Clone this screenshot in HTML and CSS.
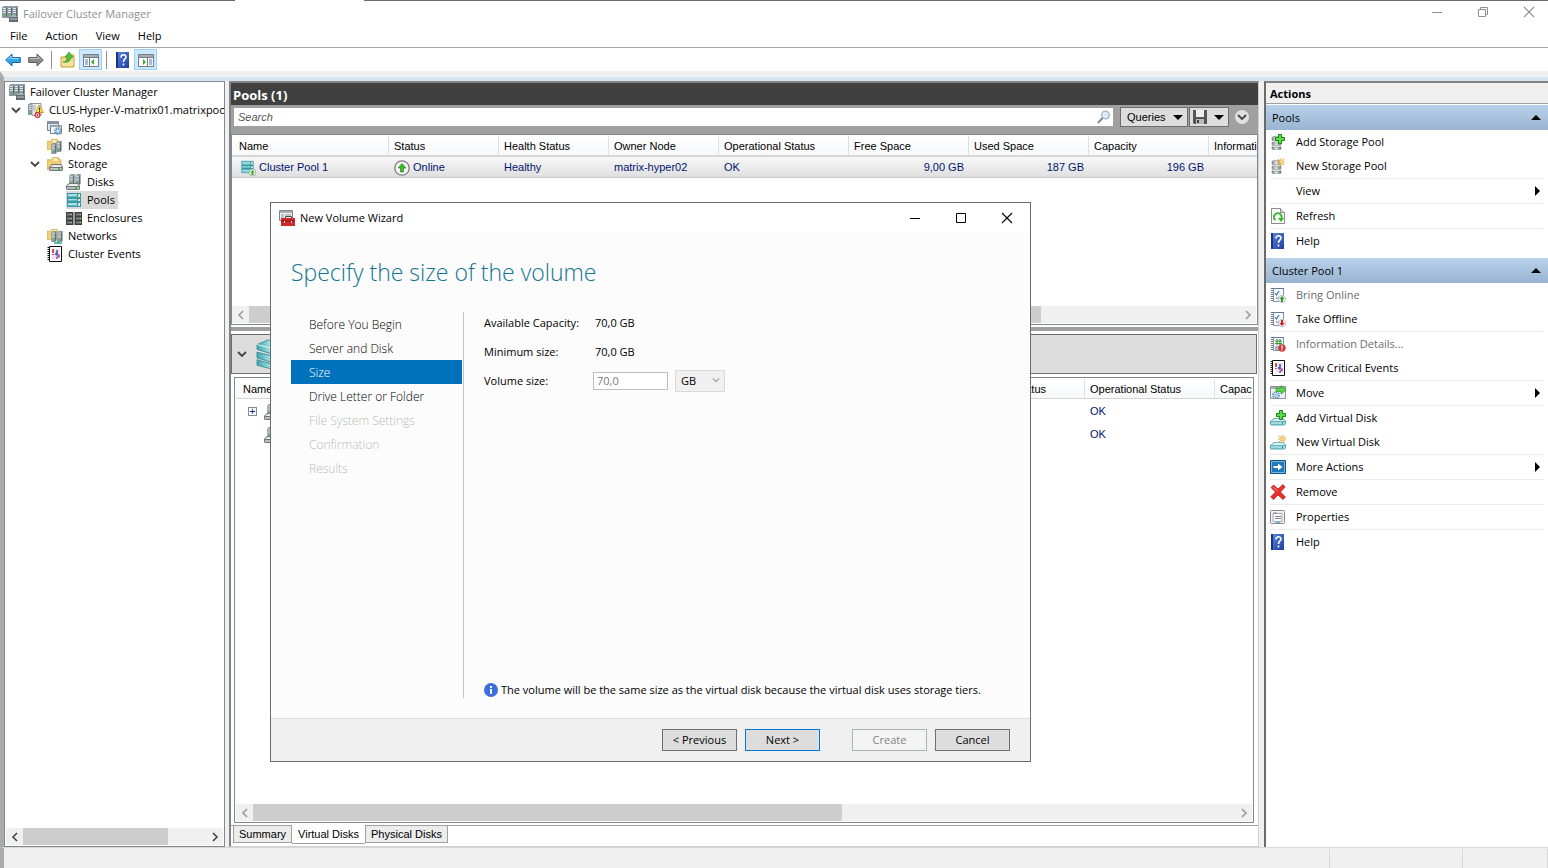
FILE: index.html
```html
<!DOCTYPE html>
<html lang="en">
<head>
    <meta charset="utf-8">
    <title>Failover Cluster Manager</title>
    <link rel="stylesheet" href="styles.css">
</head>
<body>
    <!-- icon set -->
    <svg class="icon-set" aria-hidden="true">
        <defs>
            <linearGradient id="gBlue" x1="0" y1="0" x2="1" y2="1"><stop offset="0" stop-color="#5b86e0"/><stop offset="1" stop-color="#1f3d9e"/></linearGradient>
            <linearGradient id="gTeal" x1="0" y1="0" x2="1" y2="0"><stop offset="0" stop-color="#3fa3ad"/><stop offset="0.5" stop-color="#a8e6ea"/><stop offset="1" stop-color="#4fb0ba"/></linearGradient>
            <linearGradient id="gGrey" x1="0" y1="0" x2="1" y2="0"><stop offset="0" stop-color="#8b9095"/><stop offset="0.5" stop-color="#e3e6e8"/><stop offset="1" stop-color="#7d8287"/></linearGradient>
        </defs>
        <symbol id="server" viewBox="0 0 6 12">
            <path d="M0 1.500 2 0h4v11l-2 1H0z" fill="#8b979e"/>
            <path d="M1 2h3v1H1zM1 4h3v1H1zM1 6h3v1H1z" fill="#e1ecf0"/>
            <path d="M4 2h1v9H4z" fill="#5c676e"/>
            <path d="M1 9h2v1H1z" fill="#4bd041"/>
        </symbol>
        <symbol id="folder" viewBox="0 0 14 12">
            <path d="M0 3h5V1h6v2h2v9H0z" fill="#f0cf74" stroke="#cfa645" stroke-width="0.7"/>
            <path d="M6 2h4v2H6z" fill="#fff6d5"/>
        </symbol>
        <symbol id="drive" viewBox="0 0 14 7">
            <path d="M3 0h9l2 3v3l-1 1H1L0 6V3z" fill="#72777a"/>
            <path d="M3.500 1h8L13 3H1z" fill="#e8ecee"/>
            <path d="M1 4h12v2H1z" fill="#b8bec1"/>
            <path d="M9 4h2v2H9z" fill="#43c83b"/>
        </symbol>
        <symbol id="cluster" viewBox="0 0 16 16">
            <use href="#server" x="0" y="0" width="6" height="12"/>
            <use href="#server" x="5" y="0" width="6" height="12"/>
            <use href="#server" x="10" y="0" width="6" height="12"/>
            <path d="M7 11h9v5H7z" fill="#626b72"/>
            <path d="M9 11v-1h5v1M8 13h7" fill="none" stroke="#c1c9ce"/>
        </symbol>
        <symbol id="cluster-alert" viewBox="0 0 16 16">
            <use href="#server" x="0" y="1" width="6" height="12"/>
            <path d="M4 1.500h9v12H4z" fill="#eceff0" stroke="#8e979d"/>
            <path d="M5 4h3M5 6h3M5 8h2" stroke="#9aa4ab"/>
            <path d="M11 3 15.500 10.500h-8z" fill="#ffd84c" stroke="#c08d12" stroke-width="0.8"/>
            <path d="M11.500 5.500v3M11.500 9v1" stroke="#3b2c00"/>
            <circle cx="9.500" cy="13" r="2.400" fill="#fff" stroke="#cc2a2a" stroke-width="1.200"/>
            <circle cx="9.500" cy="13" r="0.900" fill="#cc2a2a"/>
        </symbol>
        <symbol id="roles" viewBox="0 0 16 16">
            <path d="M.5 1.500h11v9H.5z" fill="#dce3ea" stroke="#76838f"/>
            <path d="M0 1h12v3H0z" fill="#8793a0"/>
            <path d="M3.500 5.500h11v8h-11z" fill="#f0f4f7" stroke="#76838f"/>
            <path d="M3 5h12v2H3z" fill="#98a4b0"/>
            <circle cx="11" cy="11" r="3" fill="none" stroke="#5b8cba" stroke-width="2" stroke-dasharray="1.400 0.900"/>
            <circle cx="11" cy="11" r="2.500" fill="#8db6dc"/>
            <circle cx="11" cy="11" r="1" fill="#fff"/>
        </symbol>
        <symbol id="nodes" viewBox="0 0 16 16">
            <use href="#folder" x="0" y="0" width="13" height="12"/>
            <use href="#server" x="4" y="5" width="6" height="11"/>
            <use href="#server" x="9" y="3" width="6" height="11"/>
        </symbol>
        <symbol id="storage" viewBox="0 0 16 16">
            <use href="#folder" x="0" y="0" width="15" height="14"/>
            <use href="#drive" x="2" y="8" width="14" height="7"/>
        </symbol>
        <symbol id="disks" viewBox="0 0 16 16">
            <use href="#server" x="3" y="0" width="6" height="11"/>
            <use href="#server" x="9" y="0" width="6" height="11"/>
            <use href="#drive" x="0" y="9" width="14" height="7"/>
        </symbol>
        <symbol id="pools" viewBox="0 0 16 16">
            <path d="M1 1h14v14H1z" fill="#3a98a3"/>
            <path d="M2 2h9v3H2zM2 7h9v2H2zM2 11h9v3H2z" fill="#a3e1e6"/>
            <path d="M2 4h9v1H2zM2 8h9v1H2zM2 13h9v1H2z" fill="#64bec8"/>
            <path d="M12 2h2v3h-2zM12 7h2v2h-2zM12 11h2v3h-2z" fill="#d5f1ee"/>
            <path d="M12 2h1v2h-1zM12 7h1v1h-1zM12 12h1v1h-1z" fill="#e8c542"/>
        </symbol>
        <symbol id="pool-up" viewBox="0 0 16 16">
            <use href="#pools" x="0" y="0" width="15" height="14"/>
            <circle cx="12.500" cy="12.500" r="3.500" fill="#e8ece8" stroke="#9aa39a" stroke-width="0.700"/>
            <path d="m12.500 10 2 2.500h-1V15h-2v-2.500h-1z" fill="#37b22c"/>
        </symbol>
        <symbol id="enclosures" viewBox="0 0 16 16">
            <path d="M0 2h7.500v13H0zM8.500 2H16v13H8.500z" fill="#3c3e3f"/>
            <path d="M1 4.500h5M1 8.500h5M1 12.500h5M10 4.500h5M10 8.500h5M10 12.500h5" stroke="#7f8484" stroke-width="2"/>
            <path d="M5.500 4v11M14.500 4v11" stroke="#b9df5d" stroke-dasharray="1 3"/>
        </symbol>
        <symbol id="networks" viewBox="0 0 16 16">
            <use href="#folder" x="0" y="0" width="13" height="12"/>
            <use href="#server" x="4" y="3" width="6" height="11"/>
            <use href="#server" x="10" y="3" width="6" height="11"/>
            <path d="M7 15h8M11 13v2" stroke="#29ac8b" stroke-width="1.500"/>
        </symbol>
        <symbol id="events" viewBox="0 0 16 16">
            <path d="M2.500.5h12v15h-12z" fill="#fff" stroke="#111"/>
            <path d="M1.500 1v14" stroke="#111" stroke-width="2" stroke-dasharray="1 1"/>
            <path d="M5 4h8M5 6h8M5 8h8M5 10h8M5 12h6" stroke="#b5b5c2" stroke-width="0.600"/>
            <path d="M6 3v4M6 8v1" stroke="#e01919" stroke-width="1.500"/>
            <path d="M10 4v4h-2" fill="none" stroke="#2343b0" stroke-width="1.400"/>
            <path d="M9 9h3v2h-2v2" fill="none" stroke="#8e2593" stroke-width="1.200"/>
        </symbol>
        <symbol id="arrow-back" viewBox="0 0 16 16">
            <path d="M.7 8 7 2v3.500h8.300v5H7V14z" fill="#33a3e8" stroke="#1766a8" stroke-linejoin="round"/>
            <path d="M2.500 7.500 6 4v2.500h8" fill="none" stroke="#9bdbff"/>
        </symbol>
        <symbol id="arrow-next" viewBox="0 0 16 16">
            <path d="M15.300 8 9 2v3.500H.7v5H9V14z" fill="#8b8b8b" stroke="#5c5c5c" stroke-linejoin="round"/>
            <path d="M1.500 6.500H10V4.500L13 7.500" fill="none" stroke="#c4c4c4"/>
        </symbol>
        <symbol id="folder-up" viewBox="0 0 16 16">
            <path d="M1 5h5l1-2h7v12H1z" fill="#f3d67d" stroke="#c9a144"/>
            <path d="M2 8h11v6H2z" fill="#f8e4a1"/>
            <path d="M3 10c3 0 4-2 4-5H5l4-5 4 5h-2c0 4-3 6-8 5z" fill="#4ec03c" stroke="#2d8721" stroke-width="0.600"/>
        </symbol>
        <symbol id="pane-left" viewBox="0 0 16 16">
            <path d="M.5 2.500h15v12H.5z" fill="#fff" stroke="#757d85"/>
            <path d="M1 3h14v2H1z" fill="#a3abb3"/>
            <path d="M1 5.500h14M6.500 6v8" stroke="#757d85"/>
            <path d="M2 8h3M2 10h3M2 12h3" stroke="#4b78ac"/>
            <path d="M11 7v6l-3-3z" fill="#36ad28"/>
        </symbol>
        <symbol id="pane-right" viewBox="0 0 16 16">
            <path d="M.5 2.500h15v12H.5z" fill="#fff" stroke="#757d85"/>
            <path d="M1 3h14v2H1z" fill="#a3abb3"/>
            <path d="M1 5.500h14M9.500 6v8" stroke="#757d85"/>
            <path d="M11 8h3M11 10h3M11 12h3" stroke="#4b78ac"/>
            <path d="M5 7v6l3-3z" fill="#36ad28"/>
        </symbol>
        <symbol id="help" viewBox="0 0 16 16">
            <path d="M1 0h13v16H1z" fill="url(#gBlue)"/>
            <path d="M1 0h2v16H1z" fill="#183486"/>
            <path d="M6 5.500c0-3.500 5-3.500 5-.5 0 2-2.500 2-2.500 5M8.500 11.500v2" fill="none" stroke="#fff" stroke-width="1.600"/>
        </symbol>
        <symbol id="online" viewBox="0 0 16 16">
            <circle cx="8" cy="8" r="7.200" fill="#f4f4f4" stroke="#7c7c7c" stroke-width="1.300"/>
            <path d="m8 3.500 4 4.500H9.500v4h-3V8H4z" fill="#3db82c" stroke="#23811a" stroke-width="0.600"/>
        </symbol>
        <symbol id="stack" viewBox="0 0 16 16">
            <path d="M2 3.500C2 2 11 2 11 3.500V6c0 1.500-9 1.500-9 0zM2 8c2 1 7 1 9 0v2.500c0 1.500-9 1.500-9 0zM2 12.500c2 1 7 1 9 0V15c0 1.500-9 1.500-9 0z" fill="url(#gGrey)" stroke="#666b6f" stroke-width="0.500"/>
            <path d="M8 10h2M8 14h2" stroke="#3fc234"/>
        </symbol>
        <symbol id="plus" viewBox="0 0 10 10">
            <path d="M3.500.5h3v3h3v3h-3v3h-3v-3h-3v-3h3z" fill="#5ddc49" stroke="#158a13"/>
        </symbol>
        <symbol id="spark" viewBox="0 0 8 8">
            <path d="M4 0v8M0 4h8M1 1l6 6M7 1 1 7" stroke="#eba42b"/>
            <circle cx="4" cy="4" r="1.600" fill="#ffd76b"/>
        </symbol>
        <symbol id="pool-add" viewBox="0 0 16 16">
            <use href="#stack" width="16" height="16"/>
            <use href="#plus" x="5" y="0" width="10" height="10"/>
        </symbol>
        <symbol id="pool-new" viewBox="0 0 16 16">
            <use href="#stack" width="16" height="16"/>
            <use href="#spark" x="7" y="0" width="8" height="8"/>
        </symbol>
        <symbol id="refresh" viewBox="0 0 16 16">
            <path d="M1.500.5h9l4 4v11h-13z" fill="#f8f8f8" stroke="#8c8c8c"/>
            <path d="M10.500.5v4h4" fill="#ddd" stroke="#8c8c8c"/>
            <path d="M5.500 12A3.800 3.800 0 1 1 11 11" fill="none" stroke="#38b52b" stroke-width="2"/>
            <path d="M8 10h6l-3 4z" fill="#38b52b"/>
        </symbol>
        <symbol id="report" viewBox="0 0 16 16">
            <path d="M3.500 1.500h10v13h-10z" fill="#f6f8fb" stroke="#8793a8"/>
            <path d="M3 1h11v1H3z" fill="#6078ad"/>
            <path d="M2 1v14" stroke="#777" stroke-width="2.500" stroke-dasharray="1 1"/>
        </symbol>
        <symbol id="bring-online" viewBox="0 0 16 16">
            <use href="#report" width="16" height="16"/>
            <path d="m5 6 1.500 2L9 4M6 11h3" fill="none" stroke="#2f7dcb" stroke-width="1.200"/>
            <circle cx="12" cy="12" r="3.700" fill="#eee" stroke="#aaa" stroke-width="0.600"/>
            <path d="m12 9 2.500 3H13v3h-2v-3H9.500z" fill="#2f9e26"/>
        </symbol>
        <symbol id="take-offline" viewBox="0 0 16 16">
            <use href="#report" width="16" height="16"/>
            <path d="m5 6 1.500 2L9 4M6 11h3" fill="none" stroke="#2f7dcb" stroke-width="1.200"/>
            <circle cx="12" cy="12" r="3.700" fill="#eee" stroke="#aaa" stroke-width="0.600"/>
            <path d="m12 15 2.500-3H13V9h-2v3H9.500z" fill="#cc1f1f"/>
        </symbol>
        <symbol id="info-details" viewBox="0 0 16 16">
            <use href="#report" width="16" height="16"/>
            <path d="M7 3v6M10 3v6M5 5h7M5 7.500h7" stroke="#35a02c" stroke-width="1.200"/>
            <path d="M5 11h4M5 13h4" stroke="#4a74b5"/>
            <circle cx="12" cy="12" r="3.700" fill="#d4383c"/>
            <path d="M12 9.500v3M12 13.500v1" stroke="#fff" stroke-width="1.300"/>
        </symbol>
        <symbol id="move" viewBox="0 0 16 16">
            <path d="M.5 1.500h15v12H.5z" fill="#eef1f4" stroke="#87929c"/>
            <path d="M1 2h14v2H1z" fill="#a5afb9"/>
            <circle cx="6" cy="10" r="3" fill="none" stroke="#6790b8" stroke-width="2" stroke-dasharray="1.400 0.900"/>
            <circle cx="6" cy="10" r="2" fill="#a9c8e4"/>
            <path d="M6 3h5V.7L16 5l-5 4V6.500H6z" fill="#5ed44b" stroke="#289420" stroke-width="0.700"/>
        </symbol>
        <symbol id="vdisk" viewBox="0 0 16 16">
            <path d="M4 8h9l3 3v3l-2 1.500H1L0 14v-2.500z" fill="#59a7b1"/>
            <path d="M4.500 8.700h8L15 11H1.500z" fill="#d3f3f6"/>
            <path d="M1 11.800h14v2.500H1z" fill="#a0dbe2"/>
            <path d="M12 12h1v2h-1z" fill="#2a9c76"/>
        </symbol>
        <symbol id="vdisk-add" viewBox="0 0 16 16">
            <use href="#vdisk" width="16" height="16"/>
            <use href="#plus" x="6" y="0" width="10" height="10"/>
        </symbol>
        <symbol id="vdisk-new" viewBox="0 0 16 16">
            <use href="#vdisk" width="16" height="16"/>
            <use href="#spark" x="8" y="1" width="8" height="8"/>
        </symbol>
        <symbol id="more" viewBox="0 0 16 16">
            <path d="M.5 1.500h15v13H.5z" fill="#2078b8" stroke="#155183"/>
            <path d="M1.500 2.500h13v11h-13z" fill="none" stroke="#7ab8e2"/>
            <path d="M3.500 7H8V4.500L12.500 8 8 11.500V9H3.500z" fill="#fff"/>
        </symbol>
        <symbol id="remove" viewBox="0 0 16 16">
            <path d="M1 3.500 3.500 1 8 5 13 .5 15 3l-4.500 5 5 5-2.500 2.500L8 11l-4.500 4.500L.7 13 5.500 8z" fill="#e5302f" stroke="#ad1717" stroke-width="0.700"/>
            <path d="m3 3 4.500 4" stroke="#ff9b92"/>
        </symbol>
        <symbol id="properties" viewBox="0 0 16 16">
            <rect x="0.500" y="1.500" width="14" height="13" rx="1" fill="#f4f4f4" stroke="#83888d"/>
            <path d="M3 4.500h9v8H3z" fill="#fff" stroke="#a0a7ad"/>
            <path d="M3 4h4M5 7.500h6M5 9.500h6" stroke="#7c858c"/>
            <path d="M6 13.500h4" stroke="#4dc3ea"/>
        </symbol>
        <symbol id="wizard" viewBox="0 0 16 16">
            <path d="M.5.5h13v10H.5z" fill="#eef0f2" stroke="#7e868d"/>
            <path d="M1 1h12v2H1z" fill="#a6adb3"/>
            <path d="M2 5h3M2 7h3M6 5h6" stroke="#8d959b"/>
            <path d="M6.500 8.500V6.500h6v2" fill="none" stroke="#4b4b4b"/>
            <path d="M2 8h14v8H2z" fill="#cf2b2b"/>
            <path d="M2 11h14" stroke="#8e1313"/>
            <path d="M5 11h1v2H5zM12 11h1v2h-1z" fill="#e7dada"/>
        </symbol>
        <symbol id="pool-large" viewBox="0 0 32 32">
            <path d="M0 6 12 1l18 3v7l-14 5L0 11zM0 14l16 4 14-4v6l-14 5L0 20zM0 22l16 5 14-5v4l-14 6L0 28z" fill="url(#gTeal)" stroke="#3a8f99"/>
            <path d="m0 6 16 4 14-6" fill="none" stroke="#dff8f9"/>
        </symbol>
        <symbol id="save" viewBox="0 0 16 16">
            <path d="M1 1h14v14H2l-1-1z" fill="#555"/>
            <path d="M4 1h8v7H4z" fill="#eee"/>
            <path d="M4 10h8v5H4z" fill="#bbb"/>
            <path d="M5 11h2v3H5z" fill="#444"/>
        </symbol>
        <symbol id="magnifier" viewBox="0 0 14 14">
            <path d="m1 13 4.500-5" stroke="#8a8a8a" stroke-width="2"/>
            <circle cx="8.500" cy="5" r="3.800" fill="#dcecf8" stroke="#9fb3c4" stroke-width="1.300"/>
        </symbol>
        <symbol id="chevron-down" viewBox="0 0 10 10"><path d="m1 3 4 4 4-4" fill="none" stroke="#444" stroke-width="1.800"/></symbol>
        <symbol id="chevron-left" viewBox="0 0 10 10"><path d="M7 1 3 5l4 4" fill="none" stroke="currentColor" stroke-width="1.600"/></symbol>
        <symbol id="chevron-right" viewBox="0 0 10 10"><path d="m3 1 4 4-4 4" fill="none" stroke="currentColor" stroke-width="1.600"/></symbol>
        <symbol id="minimize" viewBox="0 0 12 12"><path d="M1 6.500h10" stroke="currentColor"/></symbol>
        <symbol id="maximize" viewBox="0 0 12 12"><path d="M1.500 1.500h9v9h-9z" fill="none" stroke="currentColor"/></symbol>
        <symbol id="restore" viewBox="0 0 12 12"><path d="M1.500 3.500h7v7h-7zM3.500 3.500v-2h7v7h-2" fill="none" stroke="currentColor"/></symbol>
        <symbol id="close" viewBox="0 0 12 12"><path d="m1 1 10 10M11 1 1 11" stroke="currentColor" stroke-width="1.100"/></symbol>
    </svg>

    <header class="titlebar">
        <svg class="icon"><use href="#cluster"/></svg>
        <span class="titlebar-text">Failover Cluster Manager</span>
        <div class="window-buttons">
            <button type="button" aria-label="Minimize"><svg><use href="#minimize"/></svg></button>
            <button type="button" aria-label="Restore"><svg><use href="#restore"/></svg></button>
            <button type="button" aria-label="Close"><svg><use href="#close"/></svg></button>
        </div>
    </header>

    <nav class="menubar">
        <button type="button">File</button>
        <button type="button">Action</button>
        <button type="button">View</button>
        <button type="button">Help</button>
    </nav>

    <div class="toolbar">
        <button type="button" aria-label="Back"><svg class="icon"><use href="#arrow-back"/></svg></button>
        <button type="button" aria-label="Forward"><svg class="icon"><use href="#arrow-next"/></svg></button>
        <span class="toolbar-sep"></span>
        <button type="button" aria-label="Up"><svg class="icon"><use href="#folder-up"/></svg></button>
        <button type="button" class="pressed" aria-label="Console tree"><svg class="icon"><use href="#pane-left"/></svg></button>
        <span class="toolbar-sep"></span>
        <button type="button" aria-label="Help"><svg class="icon"><use href="#help"/></svg></button>
        <button type="button" class="pressed" aria-label="Action pane"><svg class="icon"><use href="#pane-right"/></svg></button>
    </div>

    <main class="console">
        <aside class="tree-pane">
            <ul class="tree">
                <li>
                    <a href="#"><svg class="icon"><use href="#cluster"/></svg><span>Failover Cluster Manager</span></a>
                    <ul>
                        <li>
                            <svg class="twisty"><use href="#chevron-down"/></svg>
                            <a href="#"><svg class="icon"><use href="#cluster-alert"/></svg><span>CLUS-Hyper-V-matrix01.matrixpool</span></a>
                            <ul>
                                <li><a href="#"><svg class="icon"><use href="#roles"/></svg><span>Roles</span></a></li>
                                <li><a href="#"><svg class="icon"><use href="#nodes"/></svg><span>Nodes</span></a></li>
                                <li>
                                    <svg class="twisty"><use href="#chevron-down"/></svg>
                                    <a href="#"><svg class="icon"><use href="#storage"/></svg><span>Storage</span></a>
                                    <ul>
                                        <li><a href="#"><svg class="icon"><use href="#disks"/></svg><span>Disks</span></a></li>
                                        <li><a href="#" class="selected"><svg class="icon"><use href="#pools"/></svg><span>Pools</span></a></li>
                                        <li><a href="#"><svg class="icon"><use href="#enclosures"/></svg><span>Enclosures</span></a></li>
                                    </ul>
                                </li>
                                <li><a href="#"><svg class="icon"><use href="#networks"/></svg><span>Networks</span></a></li>
                                <li><a href="#"><svg class="icon"><use href="#events"/></svg><span>Cluster Events</span></a></li>
                            </ul>
                        </li>
                    </ul>
                </li>
            </ul>
            <div class="scrollbar scrollbar-active">
                <button type="button" aria-label="Scroll left"><svg><use href="#chevron-left"/></svg></button>
                <div class="track"><div class="thumb thumb-tree"></div></div>
                <button type="button" aria-label="Scroll right"><svg><use href="#chevron-right"/></svg></button>
            </div>
        </aside>

        <section class="center-pane">
            <h1>Pools (1)</h1>
            <div class="filter-bar">
                <div class="search-box">
                    <input type="text" placeholder="Search" aria-label="Search">
                    <svg><use href="#magnifier"/></svg>
                </div>
                <button type="button" class="filter-btn">Queries <span class="caret"></span></button>
                <button type="button" class="filter-btn save-btn" aria-label="Save query"><svg class="icon"><use href="#save"/></svg><span class="caret"></span></button>
                <button type="button" class="expand-btn" aria-label="Expand"><svg><use href="#chevron-down"/></svg></button>
            </div>
            <div class="list pool-list">
                <table class="pool-table">
                    <colgroup>
                        <col class="col-name"><col class="col-m"><col class="col-m"><col class="col-m"><col class="col-xl"><col class="col-l"><col class="col-l"><col class="col-l"><col class="col-m">
                    </colgroup>
                    <thead>
                        <tr>
                            <th>Name</th><th>Status</th><th>Health Status</th><th>Owner Node</th><th>Operational Status</th><th>Free Space</th><th>Used Space</th><th>Capacity</th><th>Information</th>
                        </tr>
                    </thead>
                    <tbody>
                        <tr class="selected-row">
                            <td><svg class="icon"><use href="#pool-up"/></svg> Cluster Pool 1</td>
                            <td><svg class="icon"><use href="#online"/></svg> Online</td>
                            <td>Healthy</td>
                            <td>matrix-hyper02</td>
                            <td>OK</td>
                            <td class="num">9,00 GB</td>
                            <td class="num">187 GB</td>
                            <td class="num">196 GB</td>
                            <td></td>
                        </tr>
                    </tbody>
                </table>
                <div class="scrollbar">
                    <button type="button" aria-label="Scroll left"><svg><use href="#chevron-left"/></svg></button>
                    <div class="track"><div class="thumb thumb-pools"></div></div>
                    <button type="button" aria-label="Scroll right"><svg><use href="#chevron-right"/></svg></button>
                </div>
            </div>
            <div class="splitter"></div>
            <div class="detail-header">
                <svg class="twisty"><use href="#chevron-down"/></svg>
                <svg class="detail-icon"><use href="#pool-large"/></svg>
            </div>
            <div class="list disk-list">
                <table class="disk-table">
                    <colgroup>
                        <col><col class="col-m"><col class="col-xl"><col class="col-clip">
                    </colgroup>
                    <thead>
                        <tr><th>Name</th><th>Health Status</th><th>Operational Status</th><th>Capacity</th></tr>
                    </thead>
                    <tbody>
                        <tr><td><button type="button" class="expander" aria-label="Expand disk">+</button><svg class="icon"><use href="#disks"/></svg></td><td></td><td>OK</td><td></td></tr>
                        <tr><td class="leaf"><svg class="icon"><use href="#disks"/></svg></td><td></td><td>OK</td><td></td></tr>
                    </tbody>
                </table>
                <div class="scrollbar">
                    <button type="button" aria-label="Scroll left"><svg><use href="#chevron-left"/></svg></button>
                    <div class="track"><div class="thumb thumb-disks"></div></div>
                    <button type="button" aria-label="Scroll right"><svg><use href="#chevron-right"/></svg></button>
                </div>
            </div>
            <div class="tabs">
                <button type="button">Summary</button>
                <button type="button" class="active">Virtual Disks</button>
                <button type="button">Physical Disks</button>
            </div>
        </section>

        <aside class="actions-pane">
            <h2>Actions</h2>
            <h3>Pools <span class="collapse"></span></h3>
            <ul>
                <li><a href="#"><svg class="icon"><use href="#pool-add"/></svg>Add Storage Pool</a></li>
                <li><a href="#"><svg class="icon"><use href="#pool-new"/></svg>New Storage Pool</a></li>
                <li class="sep"><a href="#"><span class="icon"></span>View<span class="submenu"></span></a></li>
                <li class="sep"><a href="#"><svg class="icon"><use href="#refresh"/></svg>Refresh</a></li>
                <li class="sep"><a href="#"><svg class="icon"><use href="#help"/></svg>Help</a></li>
            </ul>
            <h3>Cluster Pool 1 <span class="collapse"></span></h3>
            <ul>
                <li><a href="#" class="disabled"><svg class="icon"><use href="#bring-online"/></svg>Bring Online</a></li>
                <li><a href="#"><svg class="icon"><use href="#take-offline"/></svg>Take Offline</a></li>
                <li class="sep"><a href="#" class="disabled"><svg class="icon"><use href="#info-details"/></svg>Information Details...</a></li>
                <li><a href="#"><svg class="icon"><use href="#events"/></svg>Show Critical Events</a></li>
                <li class="sep"><a href="#"><svg class="icon"><use href="#move"/></svg>Move<span class="submenu"></span></a></li>
                <li class="sep"><a href="#"><svg class="icon"><use href="#vdisk-add"/></svg>Add Virtual Disk</a></li>
                <li><a href="#"><svg class="icon"><use href="#vdisk-new"/></svg>New Virtual Disk</a></li>
                <li class="sep"><a href="#"><svg class="icon"><use href="#more"/></svg>More Actions<span class="submenu"></span></a></li>
                <li class="sep"><a href="#"><svg class="icon"><use href="#remove"/></svg>Remove</a></li>
                <li class="sep"><a href="#"><svg class="icon"><use href="#properties"/></svg>Properties</a></li>
                <li class="sep"><a href="#"><svg class="icon"><use href="#help"/></svg>Help</a></li>
            </ul>
        </aside>
    </main>

    <footer class="statusbar">
        <span></span>
        <span></span>
        <span></span>
    </footer>

    <div class="wizard" role="dialog" aria-labelledby="wizardTitle">
        <div class="wizard-title">
            <svg class="icon"><use href="#wizard"/></svg>
            <span id="wizardTitle">New Volume Wizard</span>
            <div class="window-buttons">
                <button type="button" aria-label="Minimize"><svg><use href="#minimize"/></svg></button>
                <button type="button" aria-label="Maximize"><svg><use href="#maximize"/></svg></button>
                <button type="button" aria-label="Close"><svg><use href="#close"/></svg></button>
            </div>
        </div>
        <h2>Specify the size of the volume</h2>
        <div class="wizard-body">
            <ul class="steps">
                <li><a href="#">Before You Begin</a></li>
                <li><a href="#">Server and Disk</a></li>
                <li><a href="#" class="current">Size</a></li>
                <li><a href="#">Drive Letter or Folder</a></li>
                <li><a href="#" class="pending">File System Settings</a></li>
                <li><a href="#" class="pending">Confirmation</a></li>
                <li><a href="#" class="pending">Results</a></li>
            </ul>
            <div class="step-content">
                <form class="size-form">
                    <span>Available Capacity:</span>
                    <span>70,0 GB</span>
                    <span>Minimum size:</span>
                    <span>70,0 GB</span>
                    <label for="volumeSize">Volume size:</label>
                    <div class="size-fields">
                        <input type="text" id="volumeSize" value="70,0" disabled>
                        <div class="select-wrap">
                            <select aria-label="Unit" disabled>
                                <option>GB</option>
                            </select>
                            <svg><use href="#chevron-down"/></svg>
                        </div>
                    </div>
                </form>
                <p class="note">
                    <svg viewBox="0 0 14 14"><circle cx="7" cy="7" r="7" fill="#3b6fdc"/><path d="M7 3v2M7 6v5" stroke="#fff" stroke-width="2"/></svg>
                    The volume will be the same size as the virtual disk because the virtual disk uses storage tiers.
                </p>
            </div>
        </div>
        <div class="wizard-footer">
            <button type="button" class="btn">&lt; Previous</button>
            <button type="button" class="btn btn-default">Next &gt;</button>
            <button type="button" class="btn btn-create" disabled>Create</button>
            <button type="button" class="btn">Cancel</button>
        </div>
    </div>
</body>
</html>
```
FILE: styles.css
```css
* {
    box-sizing: border-box;
}
body {
    margin: 0;
    height: 100vh;
    display: flex;
    flex-direction: column;
    position: relative;
    overflow: hidden;
    background: #fff;
    color: #000;
    font: 11px/18px "Open Sans", "Noto Sans", sans-serif;
}
ul {
    list-style: none;
    margin: 0;
    padding: 0;
}
a {
    color: inherit;
    text-decoration: none;
}
button, input, select {
    font: inherit;
    color: inherit;
    margin: 0;
    padding: 0;
    border: none;
    border-radius: 0;
    background: none;
}
h1, h2, h3, p {
    margin: 0;
}
.icon-set {
    position: absolute;
    width: 0;
    height: 0;
}
.icon {
    width: 16px;
    height: 16px;
    flex: none;
}

/* title bar, menu and toolbar */
.titlebar {
    display: flex;
    align-items: center;
    height: 26px;
    padding: 1px 0 0 2px;
    background: linear-gradient(90deg, #6b6b6b 235px, #fff 235px, #fff 364px, #6b6b6b 364px) 0 0 / 100% 1px no-repeat;
    color: #8f8f8f;
}
.titlebar-text {
    margin-left: 5px;
}
.window-buttons {
    display: flex;
    margin-left: auto;
}
.window-buttons button {
    display: flex;
    align-items: center;
    justify-content: center;
    width: 46px;
    height: 22px;
}
.window-buttons svg {
    width: 12px;
    height: 12px;
}
.titlebar .window-buttons {
    align-self: flex-start;
    margin-right: -4px;
}
.menubar {
    display: flex;
    height: 22px;
    padding-left: 1px;
    border-bottom: 1px solid #a8a8a8;
}
.menubar button {
    padding: 0 9px;
    height: 20px;
}
.toolbar {
    display: flex;
    align-items: center;
    height: 23px;
    padding-left: 1px;
}
.toolbar button {
    display: flex;
    align-items: center;
    justify-content: center;
    width: 23px;
    height: 21px;
    border: 1px solid transparent;
}
.toolbar button.pressed {
    background: #cce8ff;
    border-color: #99d1ff;
}
.toolbar-sep {
    width: 1px;
    height: 18px;
    margin: 0 4px;
    background: #8f8f8f;
}

/* three pane console */
.console {
    flex: 1;
    min-height: 0;
    display: grid;
    grid-template-columns: 221px 1fr 284px;
    column-gap: 4px;
    padding-top: 4px;
    border-top: 6px solid #f0f0f0;
    border-left: 4px solid #ababab;
    background: linear-gradient(#d9e4f1 4px, #f0f0f0 4px);
}
.tree-pane {
    display: flex;
    flex-direction: column;
    justify-content: space-between;
    min-width: 0;
    padding: 1px;
    border: 1px solid #828790;
    background: #fff;
    overflow: hidden;
}
.tree > li {
    padding-left: 3px;
}
.tree ul {
    padding-left: 19px;
}
.tree li {
    position: relative;
}
.tree a {
    display: inline-flex;
    align-items: center;
    height: 18px;
    padding-right: 3px;
    vertical-align: top;
    white-space: nowrap;
}
.tree span {
    margin-left: 5px;
}
.tree a.selected {
    background: #d9d9d9;
}
.twisty {
    width: 10px;
    height: 10px;
}
.tree .twisty {
    position: absolute;
    left: -17px;
    top: 4px;
}

/* scrollbars */
.scrollbar {
    display: flex;
    height: 17px;
    background: #f0f0f0;
    color: #9b9b9b;
}
.scrollbar-active {
    color: #444;
}
.scrollbar button {
    display: flex;
    align-items: center;
    justify-content: center;
    width: 17px;
}
.scrollbar svg {
    width: 10px;
    height: 10px;
}
.track {
    flex: 1;
}
.thumb {
    height: 100%;
    background: #cdcdcd;
}
.thumb-tree {
    width: 79%;
}
.thumb-pools {
    width: 80%;
}
.thumb-disks {
    width: 60%;
}

/* center pane */
.center-pane {
    display: flex;
    flex-direction: column;
    min-width: 0;
    margin-right: 1px;
    border: 2px solid #828282;
    border-right: 1px solid #d0d0d0;
    border-bottom: 1px solid #d0d0d0;
    background: #fff;
    font: 11px/18px "Liberation Sans", Arial, sans-serif;
}
.center-pane h1 {
    height: 22px;
    padding-left: 2px;
    background: #404040;
    color: #fff;
    font: bold 13px/24px "Open Sans", "Noto Sans", sans-serif;
}
.filter-bar {
    display: flex;
    align-items: center;
    height: 29px;
    padding: 0 9px 5px 3px;
    background: #a0a0a0;
}
.search-box {
    flex: 1;
    display: flex;
    align-items: center;
    height: 18px;
    margin-right: 7px;
    padding-right: 2px;
    background: #fff;
}
.search-box input {
    flex: 1;
    padding-left: 4px;
}
.search-box input::placeholder {
    color: #555;
    font-style: italic;
}
.search-box svg {
    width: 14px;
    height: 14px;
}
.filter-btn {
    display: flex;
    align-items: center;
    justify-content: space-between;
    width: 68px;
    height: 20px;
    margin-right: 1px;
    padding: 0 4px 0 6px;
    border: 1px solid #6d6d6d;
    background: #ddd;
}
.save-btn {
    width: 40px;
    padding: 0 4px 0 2px;
}
.caret {
    border: 5px solid transparent;
    border-top-color: #000;
    border-bottom: none;
}
.expand-btn {
    display: flex;
    align-items: center;
    justify-content: center;
    width: 14px;
    height: 14px;
    margin-left: 5px;
    border-radius: 50%;
    background: #e0e0e0;
}
.expand-btn svg {
    width: 10px;
    height: 10px;
}
.list {
    display: flex;
    flex-direction: column;
    justify-content: space-between;
    min-width: 0;
    overflow: hidden;
    border: 1px solid #828790;
}
.pool-list {
    height: 191px;
    padding: 1px 1px 1px 0;
}
.list table {
    flex: none;
    table-layout: fixed;
    border-collapse: separate;
    border-spacing: 0;
}
.pool-table {
    width: 1087px;
}
.disk-table {
    width: 100%;
}
.col-name {
    width: 157px;
}
.col-m {
    width: 110px;
}
.col-l {
    width: 120px;
}
.col-xl {
    width: 130px;
}
.col-clip {
    width: 37px;
}
.list th {
    height: 20px;
    padding: 0 0 0 5px;
    border-right: 1px solid #dedfe1;
    border-bottom: 1px solid #d5d5d5;
    background: linear-gradient(#fff, #f7f8fa);
    font-weight: normal;
    text-align: left;
    white-space: nowrap;
    overflow: hidden;
}
.list th:first-child {
    padding-left: 7px;
}
.list td {
    height: 23px;
    padding: 0 5px;
    color: #00156e;
    white-space: nowrap;
}
.list td:first-child {
    padding-left: 8px;
}
.list td.num {
    text-align: right;
}
.list td .icon {
    vertical-align: middle;
}
.selected-row td {
    height: 22px;
    border-top: 1px solid #d9d9d9;
    border-bottom: 1px solid #c9c9c9;
    background: linear-gradient(#f8f8f8, #dfdfdf);
}
.splitter {
    height: 4px;
    margin: 2px 0 3px;
    background: #a0a0a0;
}
.detail-header {
    display: flex;
    align-items: center;
    gap: 9px;
    height: 40px;
    margin-right: 1px;
    padding-left: 5px;
    border: 1px solid #6d6d6d;
    background: #ddd;
}
.detail-icon {
    width: 32px;
    height: 30px;
}
.disk-list {
    flex: 1;
    margin: 3px 4px 2px 3px;
    padding: 1px;
}
.disk-table th:last-child {
    border-right: none;
}
.list .disk-table td:first-child,
.disk-table td:first-child {
    padding-left: 12px;
}
.disk-table tr td.leaf:first-child {
    padding-left: 28px;
}
.expander {
    width: 9px;
    height: 9px;
    margin-right: 7px;
    border: 1px solid #7d8a99;
    font-size: 10px;
    line-height: 7px;
    vertical-align: middle;
}
.tabs {
    display: flex;
    align-items: flex-start;
    height: 21px;
    padding-left: 2px;
    border-top: 1px solid #a0a0a0;
}
.tabs button {
    height: 17px;
    padding: 0 5px;
    border: 1px solid #a0a0a0;
    border-top: none;
    background: #ececec;
    line-height: 16px;
}
.tabs .active {
    height: 19px;
    margin-top: -1px;
    padding: 0 6px;
    border-left: none;
    border-right: none;
    background: #fff;
    line-height: 18px;
}

/* actions pane */
.actions-pane {
    min-width: 0;
    border-left: 2px solid #6b6b6b;
    border-top: 2px solid #828282;
    background: #fff;
}
.actions-pane h2 {
    height: 21px;
    padding-left: 4px;
    border-bottom: 1px solid #a0a0a0;
    background: #f0f0f0;
    font-size: 11px;
    line-height: 21px;
}
.actions-pane h3 {
    display: flex;
    align-items: center;
    justify-content: space-between;
    height: 25px;
    margin-top: 1px;
    padding: 0 7px 0 6px;
    background: linear-gradient(#b9d1ea, #99b4d1);
    font-size: 11px;
    font-weight: normal;
}
.actions-pane ul + h3 {
    margin-top: 5px;
}
.collapse {
    border: 5px solid transparent;
    border-bottom-color: #000;
    border-top: none;
}
.actions-pane ul {
    padding: 0 5px 0 4px;
}
.actions-pane li.sep {
    border-top: 1px solid #ebebeb;
}
.actions-pane a {
    display: flex;
    align-items: center;
    gap: 10px;
    height: 24px;
}
.actions-pane a.disabled {
    color: #6d6d6d;
}
.submenu {
    margin: 0 3px 0 auto;
    border: 5px solid transparent;
    border-left-color: #000;
    border-right: none;
}

.statusbar {
    display: flex;
    justify-content: flex-end;
    height: 21px;
    padding-top: 1px;
    border-top: 1px solid #d7d7d7;
    border-left: 4px solid #ababab;
    background: #f0f0f0;
}
.statusbar span {
    width: 133px;
    border-right: 1px solid #d7d7d7;
}
.statusbar span:last-child {
    width: 85px;
}

/* wizard window over the console */
.wizard {
    position: absolute;
    left: 270px;
    top: 202px;
    width: 761px;
    height: 560px;
    display: flex;
    flex-direction: column;
    border: 1px solid #6b6b6b;
    background: #fcfcfc;
}
.wizard-title {
    display: flex;
    align-items: center;
    gap: 5px;
    height: 30px;
    padding-left: 8px;
    background: #fff;
}
.wizard h2 {
    padding: 22px 20px;
    color: #0f7492;
    font-size: 23px;
    font-weight: 300;
    line-height: 35px;
}
.wizard-body {
    flex: 1;
    display: flex;
    padding: 0 20px 20px;
}
.steps {
    flex: none;
    width: 173px;
    padding-right: 1px;
    border-right: 1px solid #c6c6c6;
    font-size: 12px;
    font-weight: 300;
}
.steps a {
    display: block;
    height: 24px;
    padding-left: 18px;
    line-height: 25px;
}
.steps a.current {
    background: #0072bc;
    color: #fff;
}
.steps a.pending {
    color: #bbb;
}
.step-content {
    flex: 1;
    display: flex;
    flex-direction: column;
    justify-content: space-between;
    padding-left: 20px;
}
.size-form {
    display: grid;
    grid-template-columns: 111px 1fr;
    grid-auto-rows: 29px;
    margin-top: -4px;
    align-items: center;
}
.size-fields {
    display: flex;
    align-items: center;
    gap: 7px;
    margin-left: -2px;
}
.size-fields input {
    width: 75px;
    height: 18px;
    padding-left: 3px;
    border: 1px solid #bfbfbf;
    background: #fff;
    color: #7a7a7a;
}
.select-wrap {
    position: relative;
}
.select-wrap select {
    width: 50px;
    height: 22px;
    padding-left: 5px;
    border: 1px solid #d9d9d9;
    background: #f0f0f0;
    appearance: none;
    color: #000;
    opacity: 1;
}
.select-wrap svg {
    position: absolute;
    right: 5px;
    top: 6px;
    width: 8px;
    height: 8px;
    opacity: 0.4;
}
.note {
    display: flex;
    align-items: center;
    gap: 3px;
    line-height: 16px;
    white-space: nowrap;
}
.note svg {
    width: 14px;
    height: 14px;
}
.wizard-footer {
    display: flex;
    justify-content: flex-end;
    gap: 8px;
    height: 43px;
    padding: 10px 20px;
    border-top: 1px solid #dfdfdf;
    background: #f0f0f0;
}
.btn {
    width: 75px;
    height: 22px;
    border: 1px solid #707070;
    background: #ddd;
    line-height: 20px;
}
.btn-default {
    border-color: #0078d7;
}
.btn-create {
    margin-left: 24px;
}
.btn:disabled {
    border-color: #adb2b5;
    background: #f4f4f4;
    color: #838383;
}
```
